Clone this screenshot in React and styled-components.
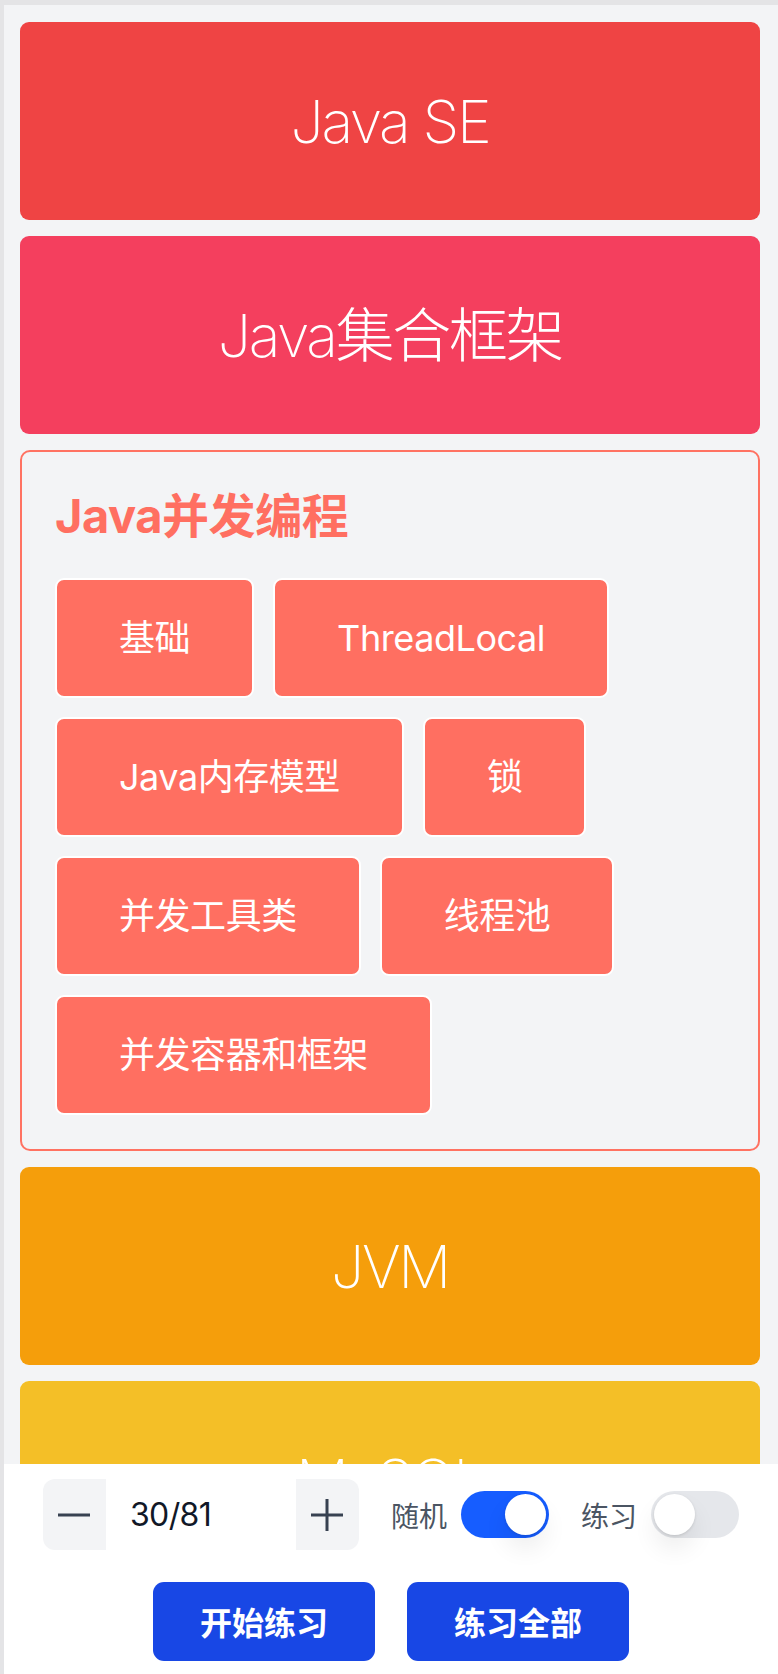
import React, { useState } from "react";
import styled, { createGlobalStyle } from "styled-components";

const GlobalStyle = createGlobalStyle`
  html, body {
    margin: 0;
    padding: 0;
    background: #e4e4e6;
  }
  body {
    font-family: Inter, "Noto Sans CJK SC", sans-serif;
  }
  * { box-sizing: border-box; }
`;

const Frame = styled.div`
  padding: 5px 0 0 4px;
  min-height: 100vh;
`;

const Page = styled.main`
  background: #f3f4f6;
  min-height: calc(100vh - 5px);
  padding: 17px 18px 120px 16px;
  display: flex;
  flex-direction: column;
  gap: 16px;
`;

const Card = styled.div`
  height: 198px;
  border-radius: 9px;
  background: ${(p) => p.$bg};
  display: flex;
  align-items: center;
  justify-content: center;
  flex-shrink: 0;
`;

const CardTitle = styled.span`
  color: #ffffff;
  font-family: Inter, "Noto Sans CJK SC", sans-serif;
  font-weight: 200;
  font-size: 59px;
  letter-spacing: -0.04em;
  line-height: 1;
`;

const Section = styled.section`
  border: 2px solid #ff7262;
  border-radius: 10px;
  padding: 35px 32px 34px 33px;
  background: #f3f4f6;
  flex-shrink: 0;
`;

const SectionTitle = styled.h2`
  margin: 0 0 34px;
  color: #ff6f61;
  font-family: Inter, "Noto Sans CJK SC", sans-serif;
  font-weight: 700;
  font-size: 47px;
  line-height: 57px;
  letter-spacing: -0.01em;
`;

const TagList = styled.div`
  display: flex;
  flex-wrap: wrap;
  gap: 19px;
`;

const Tag = styled.button`
  border: 2px solid #ffffff;
  border-radius: 9px;
  background: #ff6f61;
  color: #ffffff;
  font-family: Inter, "Noto Sans CJK SC", sans-serif;
  font-size: 36px;
  font-weight: 400;
  letter-spacing: -0.45px;
  line-height: 52px;
  padding: 32px 62px;
  cursor: pointer;
`;

const BottomBar = styled.div`
  position: fixed;
  left: 4px;
  right: 0;
  bottom: 0;
  height: 210px;
  background: #ffffff;
  display: flex;
  flex-direction: column;
  align-items: center;
  padding-top: 15px;
  gap: 32px;
`;

const ControlRow = styled.div`
  display: flex;
  align-items: center;
  justify-content: center;
`;

const Stepper = styled.div`
  display: flex;
  height: 71px;
  width: 316px;
`;

const StepButton = styled.button`
  width: 63px;
  border: none;
  background: #f3f4f6;
  display: flex;
  align-items: center;
  justify-content: center;
  padding: 0;
  cursor: pointer;
  border-radius: ${(p) => (p.$side === "left" ? "12px 0 0 12px" : "0 12px 12px 0")};
`;

const StepValue = styled.div`
  flex: 1;
  background: #ffffff;
  display: flex;
  align-items: center;
  padding-left: 24px;
  font-family: Inter, sans-serif;
  font-size: 32px;
  letter-spacing: -0.02em;
  color: #111827;
`;

const SwitchGroup = styled.label`
  display: flex;
  align-items: center;
  gap: 14px;
  margin-left: 32px;
  cursor: pointer;
`;

const SwitchLabel = styled.span`
  font-family: "Noto Sans CJK SC", sans-serif;
  font-size: 28px;
  color: #4b5563;
  line-height: 1;
`;

const Track = styled.span`
  width: 88px;
  height: 47px;
  border-radius: 24px;
  background: ${(p) => (p.$on ? "#165dff" : "#e5e7eb")};
  display: flex;
  align-items: center;
  justify-content: ${(p) => (p.$on ? "flex-end" : "flex-start")};
  padding: 0 3px;
`;

const Knob = styled.span`
  width: 41px;
  height: 41px;
  border-radius: 50%;
  background: #ffffff;
  box-shadow: 0 1px 3px rgba(0, 0, 0, 0.12), 0 14px 24px rgba(0, 0, 0, 0.07);
`;

const ActionRow = styled.div`
  display: flex;
  gap: 32px;
  justify-content: center;
`;

const ActionButton = styled.button`
  border: none;
  border-radius: 11px;
  background: #1847e5;
  color: #ffffff;
  font-family: "Noto Sans CJK SC", sans-serif;
  font-weight: 700;
  font-size: 32px;
  line-height: 41px;
  padding: 19px 47px;
  cursor: pointer;
`;

const MinusIcon = () => (
  <svg width="34" height="34" viewBox="0 0 34 34">
    <line x1="1" y1="17" x2="33" y2="17" stroke="#374151" strokeWidth="3" />
  </svg>
);

const PlusIcon = () => (
  <svg width="34" height="34" viewBox="0 0 34 34">
    <line x1="1" y1="17" x2="33" y2="17" stroke="#374151" strokeWidth="3" />
    <line x1="17" y1="1" x2="17" y2="33" stroke="#374151" strokeWidth="3" />
  </svg>
);

const topics = [
  { name: "Java SE", color: "#ef4444" },
  { name: "Java集合框架", color: "#f43f5e" },
  {
    name: "Java并发编程",
    open: true,
    tags: ["基础", "ThreadLocal", "Java内存模型", "锁", "并发工具类", "线程池", "并发容器和框架"],
  },
  { name: "JVM", color: "#f59e0b" },
  { name: "MySQL", color: "#f4bf27" },
];

export default function App() {
  const [count] = useState(30);
  const [random, setRandom] = useState(true);
  const [practice, setPractice] = useState(false);

  return (
    <>
      <GlobalStyle />
      <Frame>
        <Page>
          {topics.map((t) =>
            t.open ? (
              <Section key={t.name}>
                <SectionTitle>{t.name}</SectionTitle>
                <TagList>
                  {t.tags.map((tag) => (
                    <Tag key={tag}>{tag}</Tag>
                  ))}
                </TagList>
              </Section>
            ) : (
              <Card key={t.name} $bg={t.color}>
                <CardTitle>{t.name}</CardTitle>
              </Card>
            )
          )}
        </Page>
        <BottomBar>
          <ControlRow>
            <Stepper>
              <StepButton $side="left" aria-label="decrease">
                <MinusIcon />
              </StepButton>
              <StepValue>{count}/81</StepValue>
              <StepButton $side="right" aria-label="increase">
                <PlusIcon />
              </StepButton>
            </Stepper>
            <SwitchGroup onClick={() => setRandom(!random)}>
              <SwitchLabel>随机</SwitchLabel>
              <Track $on={random}>
                <Knob />
              </Track>
            </SwitchGroup>
            <SwitchGroup onClick={() => setPractice(!practice)}>
              <SwitchLabel>练习</SwitchLabel>
              <Track $on={practice}>
                <Knob />
              </Track>
            </SwitchGroup>
          </ControlRow>
          <ActionRow>
            <ActionButton>开始练习</ActionButton>
            <ActionButton>练习全部</ActionButton>
          </ActionRow>
        </BottomBar>
      </Frame>
    </>
  );
}
